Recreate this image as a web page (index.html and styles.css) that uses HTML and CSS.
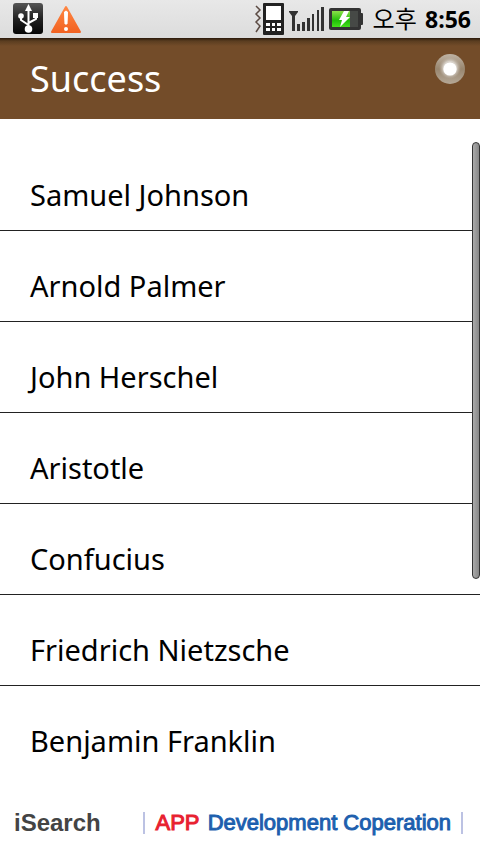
FILE: index.html
```html
<!DOCTYPE html>
<html lang="en">
<head>
<meta charset="utf-8">
<meta name="viewport" content="width=device-width, initial-scale=1">
<title>Success</title>
<link rel="stylesheet" href="styles.css">
</head>
<body>
<div class="status">
  <div class="status-left">
    <svg width="30" height="32" viewBox="0 0 30 32" aria-hidden="true">
      <defs><linearGradient id="usb" x1="0" y1="0" x2="0" y2="1"><stop offset="0" stop-color="#555"/><stop offset=".5" stop-color="#222"/><stop offset="1" stop-color="#050505"/></linearGradient></defs>
      <rect width="30" height="31" rx="3" fill="url(#usb)"/>
      <g fill="none" stroke="#fff" stroke-width="2"><path d="M15.500 5V26M15.500 22L8 17V13M15.500 20L23 16V12"/></g>
      <path d="M15.500 1L19 8H12Z" fill="#fff"/>
      <circle cx="8" cy="13" r="2.800" fill="#fff"/><rect x="20" y="10" width="5" height="5" fill="#fff"/><circle cx="15.500" cy="26" r="3.800" fill="#fff"/>
    </svg>
    <svg width="32" height="32" viewBox="0 0 32 32" aria-hidden="true">
      <defs><linearGradient id="warn" x1="0" y1="0" x2="0" y2="1"><stop offset="0" stop-color="#ff8642"/><stop offset="1" stop-color="#f26322"/></linearGradient></defs>
      <path d="M16 4L30 29H2Z" fill="url(#warn)" stroke="url(#warn)" stroke-width="2" stroke-linejoin="round"/>
      <path d="M14.500 9Q16 7 17.500 9L17 21H15Z" fill="#fff" stroke="#fff"/><circle cx="16" cy="26" r="2" fill="#fff"/>
    </svg>
  </div>
  <div class="status-right">
    <svg width="30" height="32" viewBox="0 0 30 32" aria-hidden="true">
      <path d="M2 3L6 7L2 11L6 15L2 19L6 23L2 29" fill="none" stroke="#5b4a43" stroke-width="1.500"/>
      <rect x="9" y="0" width="21" height="32" rx="1" fill="#222"/><rect x="12" y="3" width="15" height="14" fill="#fff"/>
      <path d="M12 20h4v3h-4zM18 20h3v3h-3zM23 20h4v3h-4zM12 25h4v3h-4zM18 25h3v3h-3zM23 25h4v3h-4z" fill="#fff"/>
    </svg>
    <svg width="35" height="26" viewBox="0 0 35 26" aria-hidden="true">
      <path d="M0 5H9V6L6 10V25H3V10L0 6Z" fill="#333"/>
      <path d="M8 18h3v7H8zM13 16h3v9h-3zM18 12h3v13h-3zM23 8h2v17h-2zM28 4h2v21h-2zM32 1h3v24h-3z" fill="#333"/>
    </svg>
    <svg width="35" height="22" viewBox="0 0 35 22" aria-hidden="true">
      <defs><linearGradient id="bat" x1="0" y1="0" x2="0" y2="1"><stop offset="0" stop-color="#8be04a"/><stop offset=".6" stop-color="#20bd08"/><stop offset="1" stop-color="#45e01c"/></linearGradient></defs>
      <rect width="32" height="22" rx="2" fill="#333"/><rect x="31" y="5" width="3" height="12" rx="1" fill="#333"/>
      <rect x="3" y="3" width="18" height="16" fill="url(#bat)"/><rect x="21" y="3" width="8" height="16" fill="#464946"/>
      <path d="M15 3H20L17 9H21L11 19L13 12H10Z" fill="#fff"/>
    </svg>
    <div class="clock"><span lang="ko">오후</span> <b>8:56</b></div>
  </div>
</div>
<header class="header">
  <h1>Success</h1>
  <svg class="dot" width="30" height="30" viewBox="0 0 30 30" aria-hidden="true">
    <defs>
      <linearGradient id="ring" x1="0" y1="0" x2="0" y2="1"><stop offset="0" stop-color="#bfb3a4"/><stop offset=".5" stop-color="#98866f"/><stop offset="1" stop-color="#b5a897"/></linearGradient>
      <radialGradient id="glow"><stop offset=".6" stop-color="#d8d2ca"/><stop offset="1" stop-color="#b5aa9c" stop-opacity="0"/></radialGradient>
    </defs>
    <circle cx="15" cy="15" r="15" fill="url(#ring)"/><circle cx="15" cy="14" r="11" fill="url(#glow)"/><circle cx="15" cy="15" r="6.600" fill="#fff"/>
  </svg>
</header>
<main class="list-area">
  <ul class="list">
    <li>Samuel Johnson</li>
    <li>Arnold Palmer</li>
    <li>John Herschel</li>
    <li>Aristotle</li>
    <li>Confucius</li>
    <li>Friedrich Nietzsche</li>
    <li>Benjamin Franklin</li>
  </ul>
  <div class="scrollbar"></div>
</main>
<footer class="ad">
  <a class="brand" href="#">iSearch</a>
  <a class="pitch" href="#"><span>APP</span> Development Coperation</a>
</footer>
</body>
</html>
```
FILE: styles.css
```css
* { box-sizing: border-box; }
body {
  margin: 0;
  min-height: 100vh;
  display: flex;
  flex-direction: column;
  background: #fff;
  color: #000;
  font-family: "Noto Sans", "Noto Sans CJK KR", sans-serif;
}
svg { display: block; flex: none; }
.status {
  display: flex;
  justify-content: space-between;
  height: 38px;
  padding: 0 9px 0 13px;
  background: linear-gradient(#e8e8e8, #dcdcdc);
}
.status-left, .status-right { display: flex; align-items: center; }
.status-left { gap: 7px; }
.status-right { gap: 5px; }
.clock {
  margin-left: 4px;
  font-size: 24px;
  line-height: 38px;
  white-space: nowrap;
}
.clock span { margin-right: 2px; }
.clock b { font-family: "Open Sans", sans-serif; font-size: 23px; }
.header {
  display: flex;
  justify-content: space-between;
  height: 81px;
  padding: 16px 15px 0 30px;
  background: linear-gradient(#2b1a0c 0, #5a3d20 3px, #734c29 8px);
  color: #fff;
}
h1 {
  margin: 0;
  font-size: 36px;
  font-weight: 400;
  line-height: 50px;
}
.list-area { position: relative; padding-top: 21px; }
.list { margin: 0; padding: 0; list-style: none; }
.list li {
  padding: 34px 30px 14px;
  border-bottom: 1px solid #222;
  font-size: 29px;
  line-height: 42px;
}
.list li:last-child { border-bottom: 0; }
.scrollbar {
  position: absolute;
  top: 23px;
  right: 0;
  width: 8px;
  height: 437px;
  border: 1px solid #333;
  border-radius: 4px;
  background: linear-gradient(90deg, #aaa, #888);
}
.ad {
  display: flex;
  justify-content: space-between;
  align-items: center;
  margin-top: auto;
  height: 64px;
  padding: 2px 17px 0 14px;
  font-family: "Liberation Sans", sans-serif;
  font-size: 24px;
  line-height: 22px;
}
.ad a { text-decoration: none; white-space: nowrap; }
.brand { color: #444; font-weight: 700; }
.pitch {
  padding: 0 10px;
  border: solid #bcc2e3;
  border-width: 0 2px;
  color: #1d5fae;
  font-size: 22px;
  -webkit-text-stroke: 1px;
}
.pitch span { margin-right: 2px; color: #e8202f; }
```
